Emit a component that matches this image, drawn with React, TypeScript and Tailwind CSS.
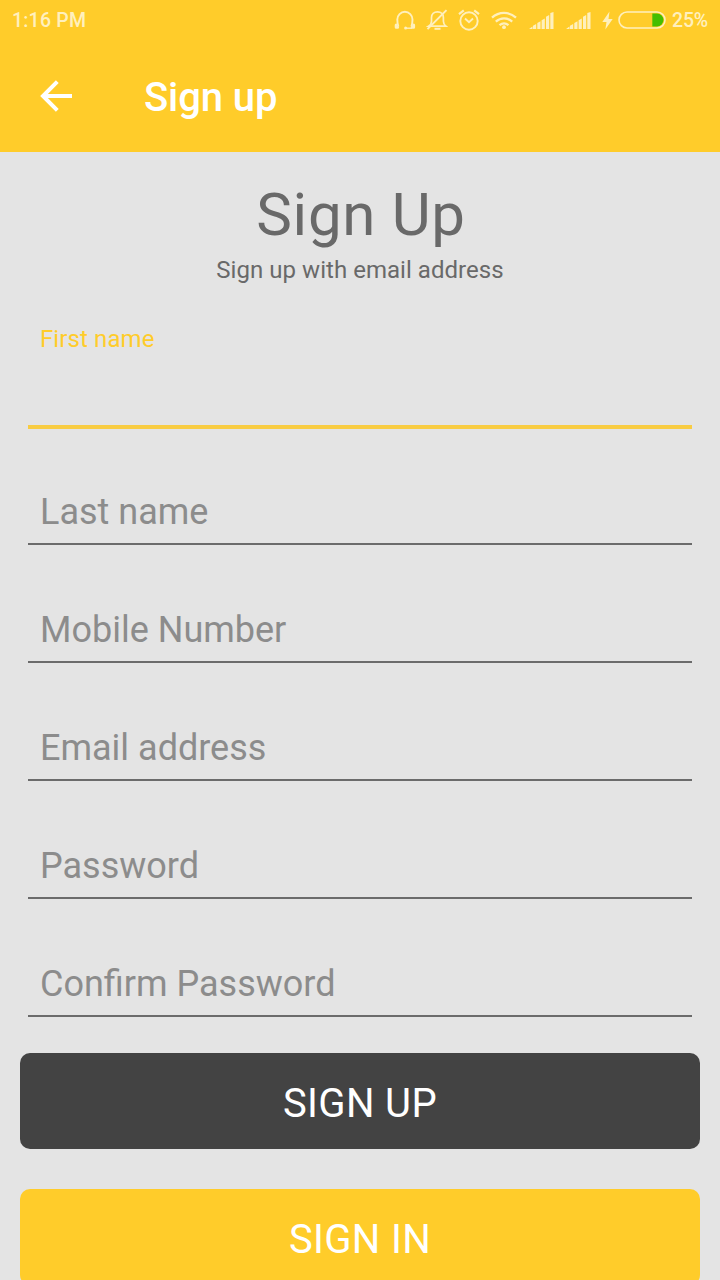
interface Field {
  id: string;
  label: string;
}

const fields: Field[] = [
  { id: 'lastName', label: 'Last name' },
  { id: 'mobile', label: 'Mobile Number' },
  { id: 'email', label: 'Email address' },
  { id: 'password', label: 'Password' },
  { id: 'confirmPassword', label: 'Confirm Password' },
];

function HeadsetIcon() {
  return (
    <svg className="w-[22px] h-[22px]" viewBox="0 0 22 22" fill="none" stroke="currentColor" strokeWidth="1.9">
      <path d="M4.400 17.500C3.700 15.500 3.300 13 3.300 10.500a7.600 7.700 0 0 1 15.200 0c0 2.500-.4 5-1.100 7" />
      <path d="M2.200 16v2.300h1.400M19.600 16v2.300h-1.400" strokeWidth="3" strokeLinejoin="round" strokeLinecap="round" />
      <path d="M18 19.200h-6.500" strokeWidth="1.400" />
      <circle cx="11.600" cy="19" r="1.500" fill="currentColor" stroke="none" />
    </svg>
  );
}

function BellOffIcon() {
  return (
    <svg className="w-[22px] h-[22px]" viewBox="0 0 22 22" fill="none" stroke="currentColor" strokeWidth="1.7">
      <path d="M2.500 17.200h17.500c-2-1.500-2.600-3-2.600-5V8.500c0-3.400-2.400-5.700-5.900-5.700S5.500 5.100 5.500 8.500v3.700c0 2-.5 3.500-3 5z" />
      <path d="M8.500 19.800h6" strokeWidth="2" />
      <path d="M20.500 1.200L1.500 20.200" strokeWidth="1.900" />
    </svg>
  );
}

function AlarmIcon() {
  return (
    <svg className="w-[22px] h-[22px]" viewBox="0 0 22 22" fill="none" stroke="currentColor" strokeWidth="1.9">
      <circle cx="11" cy="12" r="8.700" />
      <path d="M7 9.500l4 3.700 4-3.700" />
      <path d="M1 5.200L5.800 1.300M21 5.200l-4.800-3.900" strokeWidth="2.200" />
    </svg>
  );
}

function WifiIcon() {
  return (
    <svg className="w-[26px] h-[19px]" viewBox="0 0 26 19" fill="none" stroke="currentColor" strokeWidth="2.300">
      <path d="M1 6.700C8 .300 18 .300 25 6.700" />
      <path d="M4.800 10.600c4.900-4.300 11.500-4.300 16.400 0" />
      <path d="M8.500 14.200c2.700-2.200 6.300-2.200 9 0" />
      <circle cx="13" cy="16.200" r="1.900" fill="currentColor" stroke="none" />
    </svg>
  );
}

function SignalIcon() {
  return (
    <svg className="w-[25px] h-[17px]" viewBox="0 0 25 17" fill="currentColor">
      <path d="M0 17l3.500-2.500V17zM4 13.800l3.200-1.800v5H4zM8.300 11l3.200-1.800V17H8.300zM12.600 8.200l3.200-1.700V17h-3.200zM17 4.700L20.200 3v14H17zM21.300 1l3.200-1v17h-3.200z" />
    </svg>
  );
}

function BoltIcon() {
  return (
    <svg className="w-[11px] h-[19px]" viewBox="0 0 11 19" fill="currentColor">
      <path d="M7.500 .5L.3 11h4.200L3.300 18.500 10.700 8H6.500z" />
    </svg>
  );
}

function BatteryIcon() {
  return (
    <svg className="w-12 h-[18px]" viewBox="0 0 48 18" fill="none">
      <path d="M34.300 2.500H39a6.500 6.500 0 0 1 0 13h-4.700z" fill="#45be00" />
      <rect x="1" y="1" width="46" height="16" rx="8" stroke="currentColor" strokeWidth="1.600" />
    </svg>
  );
}

function StatusBar() {
  return (
    <div className="flex h-10 items-center justify-between px-3 text-[19px] font-medium text-[#fff0bd]">
      <span className="pt-px text-[19.5px] tracking-[0.2px]">1:16 PM</span>
      <div className="flex items-center">
        <HeadsetIcon />
        <div className="ml-[10px]"><BellOffIcon /></div>
        <div className="ml-[10px]"><AlarmIcon /></div>
        <div className="ml-[11px]"><WifiIcon /></div>
        <div className="ml-[12px] mt-px"><SignalIcon /></div>
        <div className="ml-[12px] mt-px"><SignalIcon /></div>
        <div className="ml-[11px]"><BoltIcon /></div>
        <div className="ml-[5px]"><BatteryIcon /></div>
        <span className="ml-[6px] pt-px text-[19.5px] tracking-[-0.2px]">25%</span>
      </div>
    </div>
  );
}

function AppBar() {
  return (
    <div className="flex h-28 items-center pl-10 text-white">
      <button className="w-8">
        <svg className="w-8 h-8" viewBox="0 0 32 32" fill="none" stroke="currentColor" strokeWidth="4">
          <path d="M32 16H3M17.300 1.700L3 16l14.300 14.300" />
        </svg>
      </button>
      <h1 className="ml-[72px] mt-1 text-[40px] leading-[48px] font-medium tracking-[-0.1px]">Sign up</h1>
    </div>
  );
}

export default function App() {
  return (
    <div className="h-[1280px] w-[720px] overflow-hidden bg-[#e4e4e4] font-['Roboto',sans-serif]">
      <header className="bg-[#ffcc2a]">
        <StatusBar />
        <AppBar />
      </header>

      <main className="flex flex-col px-5 pt-[27px]">
        <h2 className="pl-0.5 text-center text-[60px] leading-[71px] tracking-[0.7px] text-[#696969]">Sign Up</h2>
        <p className="mt-1 text-center text-[24px] leading-8 tracking-[0.04px] text-[#696969]">
          Sign up with email address
        </p>

        <form className="px-2">
          {/* focused field, label floats above the input */}
          <div className="mt-[37px] h-[106px] border-b-4 border-[#f8cc42] px-3">
            <label className="block text-[24px] leading-8 tracking-[0.1px] text-[#ffcc2a]">First name</label>
          </div>
          <div className="-mt-0.5">
            {fields.map((field) => (
              <div
                key={field.id}
                className="h-[118px] border-b-2 border-[#6b6b6b] px-3 pt-[63px] text-[36px] leading-[44px] text-[#8c8c8c]"
              >
                {field.label}
              </div>
            ))}
          </div>
        </form>

        <button className="mt-9 h-24 shrink-0 rounded-[10px] bg-[#434343] pt-[5px] text-[40px] leading-[48px] tracking-[0.35px] text-white">
          SIGN UP
        </button>
        <button className="mt-10 h-24 shrink-0 rounded-[10px] bg-[#ffcc2a] pt-[5px] text-[40px] leading-[48px] tracking-[0.35px] text-white">
          SIGN IN
        </button>
      </main>
    </div>
  );
}
